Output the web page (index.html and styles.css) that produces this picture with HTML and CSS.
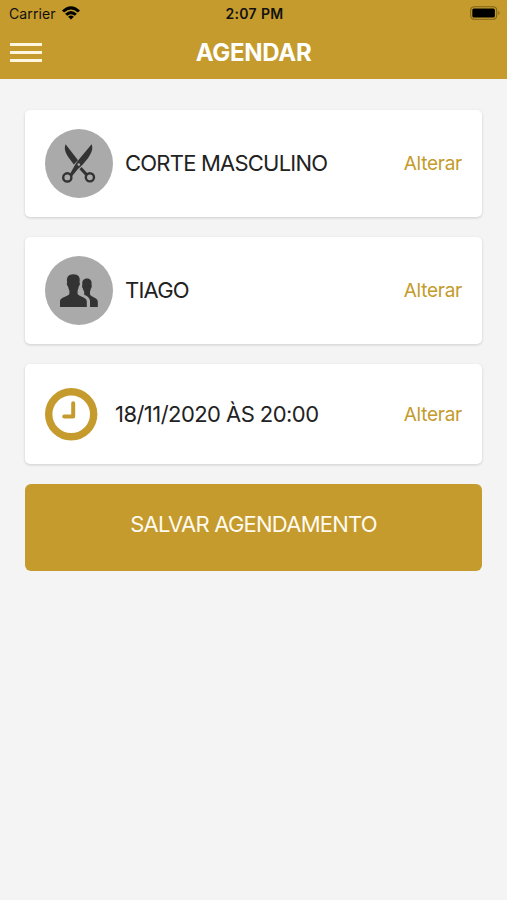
FILE: index.html
```html
<!DOCTYPE html>
<html lang="pt-BR">
<head>
    <meta charset="UTF-8">
    <title>Agendar</title>
    <link rel="stylesheet" href="styles.css">
</head>
<body>
    <header class="header">
        <div class="status-bar">
            <div class="carrier">
                <span>Carrier</span>
                <svg width="18" height="14" viewBox="0 0 18 14">
                    <path d="M0 4.5 Q9 -4 18 4.5 L15.9 6.6 Q9 0.5 2.1 6.6 Z"/>
                    <path d="M3.1 7.7 Q9 2.2 14.9 7.7 L12.8 9.8 Q9 6.6 5.2 9.8 Z"/>
                    <path d="M6.1 10.7 Q9 8.2 11.9 10.7 L9 13.6 Z"/>
                </svg>
            </div>
            <span class="time">2:07 PM</span>
            <svg class="battery" width="30" height="14" viewBox="0 0 30 14">
                <rect x="0.7" y="0.7" width="26" height="12.6" rx="3.6" fill="none" stroke="#806418" stroke-width="1.1"/>
                <rect x="2.3" y="2.5" width="22.6" height="9" rx="1.6"/>
                <path d="M28.3 4.8 Q30.8 7 28.3 9.2 Z" fill="#806418"/>
            </svg>
        </div>
        <div class="nav-bar">
            <button class="menu" aria-label="Menu">
                <span></span>
                <span></span>
                <span></span>
            </button>
            <h1>AGENDAR</h1>
        </div>
    </header>

    <main class="content">
        <div class="card">
            <div class="avatar">
                <svg width="68" height="69" viewBox="0 0 68 69">
                    <g fill="#333">
                        <path d="M20.6 15.2 C18.4 20.4 20.6 25.2 28.8 35.4 L33 31.2 Z"/>
                        <path d="M46.6 15.2 C48.8 20 46 26.5 38 35.2 C36.4 37 34.4 38.4 32.7 40.2 L27.2 47 L25 45 L29.4 37 C30.6 34.8 32.6 32 34.3 30 Z"/>
                        <path d="M36.6 38 L43 45 L40.8 47 L34.4 40.2 Z"/>
                    </g>
                    <circle cx="22.3" cy="48.4" r="4.1" fill="none" stroke="#333" stroke-width="2.4"/>
                    <circle cx="44.9" cy="48.3" r="4.1" fill="none" stroke="#333" stroke-width="2.4"/>
                    <circle cx="33.8" cy="35.6" r="1.3" fill="#aaa"/>
                </svg>
            </div>
            <span class="label">CORTE MASCULINO</span>
            <a class="change">Alterar</a>
        </div>

        <div class="card">
            <div class="avatar">
                <svg width="68" height="69" viewBox="0 0 68 69">
                    <g fill="#333">
                        <path d="M22.2 26.5 C21.2 21 23.4 18.2 28.4 18.2 C33.4 18.2 35.5 21 34.5 26.5 C35.5 27.2 34.6 30 33.7 30.6 C33.4 32.9 33 33.6 32.6 34.8 V38 C33.4 40.4 41.8 41.2 41.8 45.2 V51 H15 V45.2 C15 41.2 23.6 40.4 24.4 38 V34.8 C24 33.6 23.5 32.9 23.1 30.6 C22 30 21.3 27.2 22.2 26.5 Z"/>
                        <path d="M37.4 29 C36.7 24.6 38.6 22.4 42 22.4 C45.4 22.4 47.2 24.6 46.5 29 C47.3 29.6 46.6 32 45.9 32.4 C45.6 34 45.3 34.8 45 35.5 V38.5 C45.7 40.6 52.8 41.8 52.8 45.4 V51 H45 V44.6 C44.6 41.9 42.2 40 39.2 38.8 V35.5 C38.6 34.6 38.2 33.8 37.9 32.4 C37.1 32 36.6 29.6 37.4 29 Z"/>
                    </g>
                </svg>
            </div>
            <span class="label">TIAGO</span>
            <a class="change">Alterar</a>
        </div>

        <div class="card card-time">
            <svg class="clock" width="53" height="53" viewBox="0 0 53 53" fill="none" stroke="#c49b2c">
                <circle cx="26.2" cy="26.2" r="22.5" stroke-width="7.4"/>
                <path d="M28.2 15.2 V28.5 H19.2" stroke-width="4" stroke-linecap="round" stroke-linejoin="round"/>
            </svg>
            <span class="label label-time">18/11/2020 ÀS 20:00</span>
            <a class="change">Alterar</a>
        </div>

        <button class="save">SALVAR AGENDAMENTO</button>
    </main>
</body>
</html>
```
FILE: styles.css
```css
* {
    box-sizing: border-box;
}
body {
    margin: 0;
    min-height: 100vh;
    background-color: #f4f4f4;
    color: #222;
    font-family: Inter, "Liberation Sans", sans-serif;
}
.header {
    height: 79px;
    background-color: #c49b2c;
}
.status-bar {
    display: grid;
    grid-template-columns: 1fr auto 1fr;
    align-items: center;
    height: 27px;
    padding: 0 7px 0 9px;
    color: #111;
    font-size: 14px;
}
.carrier {
    display: flex;
    align-items: center;
    gap: 6px;
    letter-spacing: 0.1px;
}
.carrier svg {
    margin-top: -2px;
}
.time {
    font-weight: 600;
    letter-spacing: 0.35px;
}
.battery {
    justify-self: end;
    margin-top: -1px;
}
.nav-bar {
    display: grid;
    grid-template-columns: 32px 1fr 32px;
    align-items: center;
    height: 51px;
    padding: 0 10px;
}
.menu {
    display: flex;
    flex-direction: column;
    gap: 5px;
    padding: 0;
    border: 0;
    background: none;
}
.menu span {
    width: 32px;
    height: 3px;
    background-color: #fff6e0;
}
h1 {
    margin: 0;
    color: #fff;
    font-size: 24px;
    font-weight: 700;
    letter-spacing: -0.3px;
    text-align: center;
}
.content {
    display: flex;
    flex-direction: column;
    gap: 20px;
    padding: 31px 25px 0;
}
.card {
    display: flex;
    align-items: center;
    height: 107px;
    padding: 0 20px;
    border-radius: 5px;
    background-color: #fff;
    box-shadow: 0 1px 3px rgba(0, 0, 0, 0.16);
}
.card-time {
    height: 100px;
}
.avatar {
    width: 68px;
    height: 69px;
    margin-right: 12px;
    border-radius: 50%;
    background-color: #aaa;
}
.clock {
    margin-right: 17px;
}
.label {
    padding-bottom: 1px;
    font-size: 22px;
    letter-spacing: -0.78px;
    white-space: nowrap;
}
.label-time {
    padding-bottom: 0;
    letter-spacing: -0.55px;
}
.change {
    margin-left: auto;
    color: #c49b2c;
    font-size: 19px;
    letter-spacing: -0.25px;
}
.save {
    height: 87px;
    padding: 0 0 8px;
    border: 0;
    border-radius: 6px;
    background-color: #c49b2c;
    color: #fffaf0;
    font-family: inherit;
    font-size: 22px;
    letter-spacing: -0.76px;
}
```
